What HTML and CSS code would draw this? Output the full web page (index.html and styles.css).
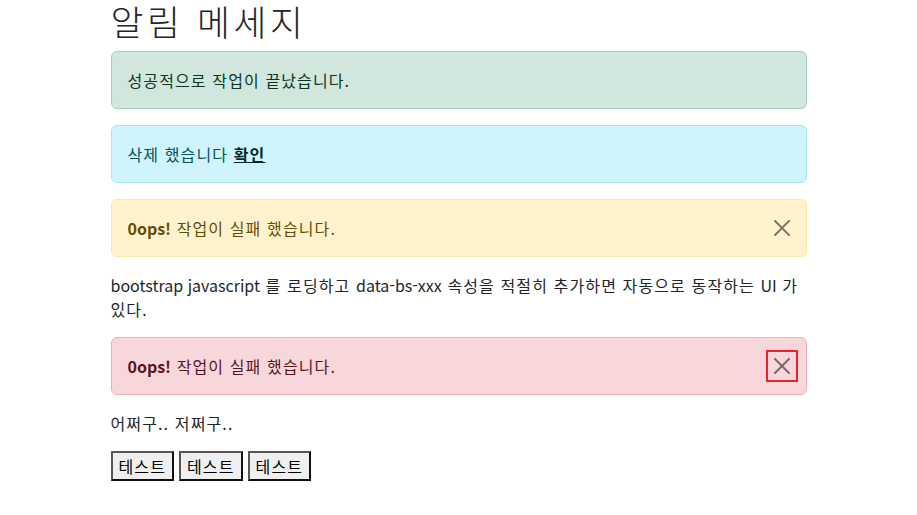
FILE: index.html
```html
<!DOCTYPE html>
<html lang="ko">
<head>
    <meta charset="UTF-8">
    <meta name="viewport" content="width=device-width, initial-scale=1.0">
    <title>알림 메세지</title>
    <link rel="stylesheet" href="styles.css">
</head>
<body>

    <div class="container">
        <h1>알림 메세지</h1>

        <div class="alert alert-success">
            <div>성공적으로 작업이 끝났습니다.</div>
        </div>

        <div class="alert alert-info">
            <div>삭제 했습니다 <a href="#" class="alert-link">확인</a></div>
        </div>

        <div class="alert alert-warning">
            <div><strong class="en">0ops!</strong> 작업이 실패 했습니다.</div>
            <button type="button" class="btn-close" aria-label="Close">
                <svg viewBox="0 0 16 16" width="16" height="16"><path d="M.293.293a1 1 0 0 1 1.414 0L8 6.586 14.293.293a1 1 0 1 1 1.414 1.414L9.414 8l6.293 6.293a1 1 0 0 1-1.414 1.414L8 9.414l-6.293 6.293a1 1 0 0 1-1.414-1.414L6.586 8 .293 1.707a1 1 0 0 1 0-1.414z"/></svg>
            </button>
        </div>

        <p><span class="en">bootstrap javascript</span> 를 로딩하고 <span class="en">data-bs-xxx</span> 속성을 적절히 추가하면 자동으로 동작하는 <span class="en">UI</span> 가 있다.</p>

        <div class="alert alert-danger">
            <div><strong class="en">0ops!</strong> 작업이 실패 했습니다.</div>
            <button type="button" class="btn-close focused" aria-label="Close">
                <svg viewBox="0 0 16 16" width="16" height="16"><path d="M.293.293a1 1 0 0 1 1.414 0L8 6.586 14.293.293a1 1 0 1 1 1.414 1.414L9.414 8l6.293 6.293a1 1 0 0 1-1.414 1.414L8 9.414l-6.293 6.293a1 1 0 0 1-1.414-1.414L6.586 8 .293 1.707a1 1 0 0 1 0-1.414z"/></svg>
            </button>
        </div>

        <p>어쩌구.. 저쩌구..</p>

        <div class="btn-row">
            <button type="button" class="test-btn">테스트</button>
            <button type="button" class="test-btn">테스트</button>
            <button type="button" class="test-btn">테스트</button>
        </div>
    </div>

</body>
</html>
```

FILE: styles.css
```css
body {
    margin: 0;
    font-family: "Noto Sans CJK KR", "Noto Sans", sans-serif;
    font-size: 16px;
    line-height: 1.5;
    letter-spacing: 0.07em;
    color: #212529;
    background-color: #fff;
}

/* 영문은 자간 없이 */
.en {
    letter-spacing: 0;
}

.container {
    max-width: 696px;
    margin: 0 auto;
    padding: 0 12px;
}

h1 {
    margin: 0 0 8px;
    font-size: 35.75px;
    font-weight: 300;
    line-height: 1.2;
    letter-spacing: 0.1em;
}

p {
    margin: 0 0 16px;
}

.alert {
    display: flex;
    justify-content: space-between;
    align-items: center;
    padding: 16px;
    margin-bottom: 16px;
    border: 1px solid transparent;
    border-radius: 6px;
}

.alert-success {
    color: #0a3622;
    background-color: #d1e7dd;
    border-color: #a3cfbb;
}

.alert-info {
    color: #055160;
    background-color: #cff4fc;
    border-color: #9eeaf9;
}

.alert-warning {
    color: #664d03;
    background-color: #fff3cd;
    border-color: #ffe69c;
}

.alert-danger {
    color: #58151c;
    background-color: #f8d7da;
    border-color: #f1aeb5;
}

.alert strong {
    font-weight: 700;
}

.alert-link {
    color: #032830;
    font-weight: 700;
}

.btn-close {
    display: flex;
    width: 16px;
    height: 16px;
    padding: 0;
    border: 0;
    background: transparent;
    opacity: 0.5;
    cursor: pointer;
}

.btn-close svg {
    fill: #000;
}

.btn-close.focused {
    opacity: 1;
    outline: 2px solid #e8242c;
    outline-offset: 6px;
}

.btn-close.focused svg {
    opacity: 0.5;
}

.btn-row {
    display: flex;
    gap: 5px;
}

.test-btn {
    font-family: inherit;
    font-size: 16px;
    line-height: 1.5;
    letter-spacing: inherit;
    padding: 1px 6px;
    color: #000;
    background-color: #efefef;
    border: 2px solid;
    border-color: #555 #111 #111 #555;
    border-radius: 0;
}
```
